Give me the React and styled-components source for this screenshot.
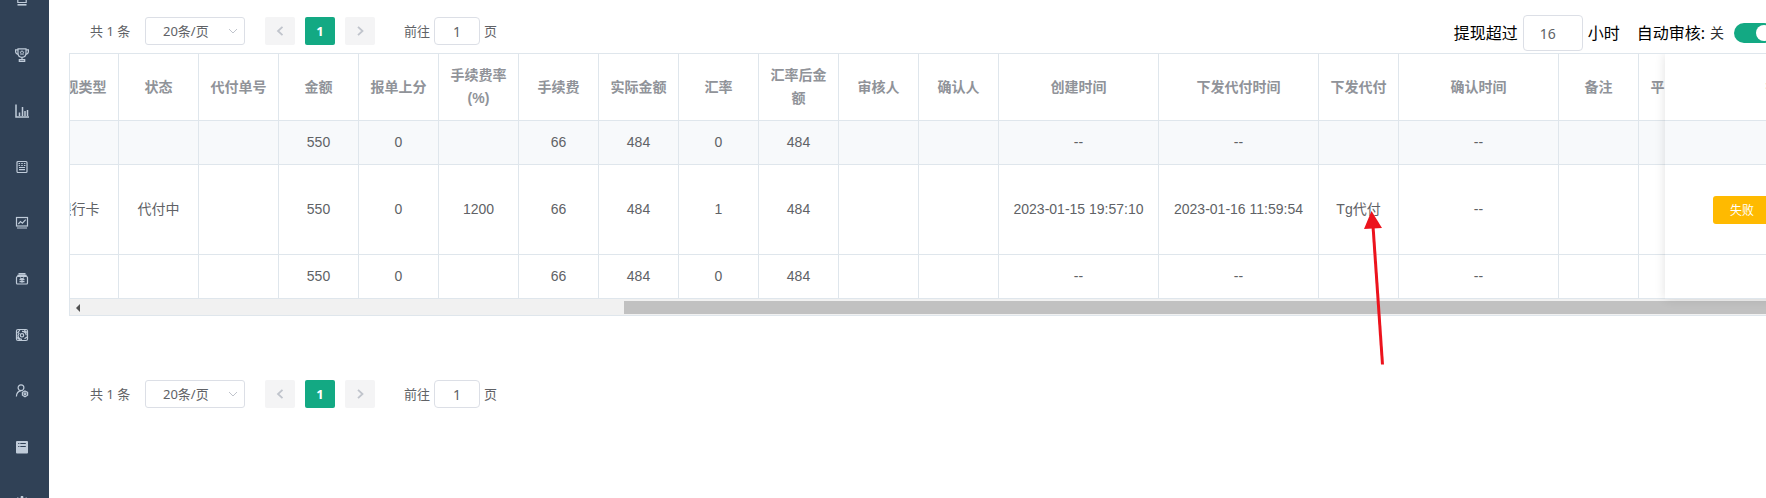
import React, { useLayoutEffect, useRef } from 'react';
import styled, { createGlobalStyle } from 'styled-components';

const GlobalStyle = createGlobalStyle`
  *, *::before, *::after { box-sizing: border-box; }
  body {
    margin: 0;
    background: #fff;
    color: #606266;
    font-family: "Liberation Sans", "Noto Sans CJK SC", sans-serif;
    font-size: 14px;
    overflow: hidden;
  }
  button, input, select { font-family: inherit; margin: 0; }
`;

const uiFont = '"Noto Sans", "Noto Sans CJK SC", sans-serif';
const line = '#dfe6ec';
const green = '#13a983';

/* ---------- shell ---------- */

const Page = styled.div`
  display: flex;
  height: 100vh;
  overflow: hidden;
`;

const Sidebar = styled.nav`
  flex: 0 0 49px;
  overflow: hidden;
  background: #304156;
`;

const Menu = styled.ul`
  list-style: none;
  margin: -29px 0 0;
  padding: 0;
`;

const MenuLink = styled.a`
  display: flex;
  align-items: center;
  height: 56px;
  padding-left: 15px;
  color: #bfcbd9;
`;

const Main = styled.main`
  flex: 1;
  min-width: 0;
  padding-left: 20px;
  overflow: hidden;
`;

const Content = styled.div`
  width: calc(100% + 130px);
`;

const TopBar = styled.div`
  display: flex;
  justify-content: space-between;
  align-items: flex-start;
  padding: 15px 122px 2px 0;
`;

/* ---------- pagination ---------- */

const Pager = styled.div`
  display: flex;
  align-items: center;
  padding: 2px 20px;
  font-family: ${uiFont};
  font-size: 13px;
  line-height: 28px;
`;

const BottomArea = styled.div`
  padding-top: 62px;
`;

const Total = styled.span`
  width: 46px;
  padding-left: 1px;
  margin-right: 10px;
  white-space: nowrap;
`;

const SizeBox = styled.span`
  display: grid;
  align-items: center;
  width: 100px;
  margin-right: 20px;
  & > * { grid-area: 1 / 1; }
`;

const SizeSelect = styled.select`
  appearance: none;
  width: 100%;
  height: 28px;
  padding: 0 24px 0 17px;
  border: 1px solid #dcdfe6;
  border-radius: 3px;
  background: #fff;
  color: #606266;
  font-size: 13px;
`;

const Caret = styled.svg`
  justify-self: end;
  margin-right: 7px;
  pointer-events: none;
`;

const PageButtons = styled.div`
  display: flex;
  gap: 10px;
  margin-right: 29px;
`;

const PageButton = styled.button`
  display: flex;
  align-items: center;
  justify-content: center;
  width: 30px;
  height: 28px;
  padding: 0;
  border: 0;
  border-radius: 2px;
  background: ${(p) => (p.$active ? green : '#f4f4f5')};
  color: ${(p) => (p.$active ? '#fff' : '#c0c4cc')};
  font-size: 13px;
  font-weight: 700;
`;

const Jump = styled.label`
  display: flex;
  align-items: center;
  gap: 4px;
`;

const TextInput = styled.input`
  width: ${(p) => p.$width};
  height: ${(p) => p.$height};
  padding: ${(p) => (p.$left ? '0 16px' : '0 3px')};
  border: 1px solid #dcdfe6;
  border-radius: 4px;
  background: #fff;
  color: #606266;
  font-family: ${uiFont};
  font-size: 14px;
  text-align: ${(p) => (p.$left ? 'left' : 'center')};
  outline: 0;
`;

/* ---------- review settings ---------- */

const Settings = styled.div`
  display: flex;
  align-items: center;
  font-family: ${uiFont};
  font-size: 16px;
  line-height: 36px;
  color: #000;
  white-space: nowrap;
`;

const HoursLabel = styled.label`
  display: flex;
  align-items: center;
  gap: 5px;
  margin-right: 17px;
`;

const SwitchLabel = styled.label`
  display: flex;
  align-items: center;
`;

const OffText = styled.span`
  margin: 0 10px 0 5px;
  font-size: 14px;
  color: #303133;
`;

const Switch = styled.input`
  appearance: none;
  display: flex;
  align-items: center;
  justify-content: flex-end;
  width: 40px;
  height: 20px;
  margin: 0;
  padding: 2px;
  border-radius: 10px;
  background: ${green};
  &::before {
    content: "";
    width: 16px;
    height: 16px;
    border-radius: 50%;
    background: #fff;
  }
  &:not(:checked) {
    justify-content: flex-start;
    background: #dcdfe6;
  }
`;

/* ---------- table ---------- */

const TableArea = styled.div`
  position: relative;
`;

const TableFrame = styled.div`
  position: relative;
  overflow: hidden;
  border: 1px solid ${line};
`;

const Scroller = styled.div`
  overflow: hidden;
`;

const Table = styled.table`
  width: ${(p) => p.$width};
  table-layout: fixed;
  border-collapse: separate;
  border-spacing: 0;
  line-height: 23px;
  text-align: center;
`;

const Row = styled.tr`
  height: ${(p) => p.$height};
  background: ${(p) => (p.$shaded ? '#f7f9fb' : '#fff')};
`;

const HeadCell = styled.th`
  padding: 0 10px;
  border-right: 1px solid ${line};
  border-bottom: 1px solid ${line};
  color: #909399;
  font-weight: 700;
`;

const Cell = styled.td`
  padding: 0 10px;
  border-right: 1px solid ${line};
  border-bottom: 1px solid ${line};
`;

const ActionCell = styled(Cell)`
  padding-left: 48px;
  text-align: left;
`;

const FixedPane = styled.div`
  position: absolute;
  top: 0;
  right: 0;
  width: 230px;
  background: #fff;
  box-shadow: 0 0 10px rgba(0, 0, 0, 0.12);
`;

const FailButton = styled.button`
  display: block;
  height: 28px;
  padding: 0 17px;
  border: 0;
  border-radius: 3px;
  background: #ffba00;
  color: #fff;
  font-size: 12px;
`;

const ScrollTrack = styled.div`
  display: flex;
  align-items: center;
  height: 16px;
  padding-top: 1px;
  background: #f1f1f1;
`;

const ScrollArrow = styled.svg`
  flex: 0 0 17px;
`;

const ScrollThumb = styled.div`
  flex: 1;
  height: 13px;
  margin: 0 17px 0 537px;
  background: #c1c1c1;
`;

const Pointer = styled.svg`
  position: absolute;
  top: 157px;
  left: 1290px;
  pointer-events: none;
`;

/* ---------- icons ---------- */

const Icon = ({ children }) => (
  <svg width="14" height="14" viewBox="0 0 14 14" fill="none" stroke="currentColor" strokeWidth="1.2" aria-hidden="true">
    {children}
  </svg>
);

const icons = [
  {
    name: 'home',
    art: (
      <>
        <path d="M1.500 5.500 7 1l5.500 4.500M2.800 5v5.500h8.400V5" />
        <path d="M2.500 12.800h9" strokeWidth="1.600" />
      </>
    ),
  },
  {
    name: 'awards',
    art: (
      <>
        <path d="M3 .8h8v4.500c0 2.400-1.600 4-4 4s-4-1.600-4-4z" />
        <path d="M3 1.900H.6v1.700C.6 5 1.600 6.200 3.300 6.400M11 1.900h2.400v1.700c0 1.400-1 2.600-2.700 2.800" />
        <path d="M7 9.300v2.200M4.300 13.400v-1.700h5.400v1.700z" />
        <path d="m7 2.600.6 1.300 1.500.2-1.100 1 .3 1.500L7 5.900l-1.300.7.3-1.500-1.100-1 1.500-.2z" strokeWidth=".8" />
      </>
    ),
  },
  {
    name: 'statistics',
    art: (
      <>
        <path d="M1 .5v12.500H14" strokeWidth="1.500" />
        <path d="M4.500 12V8.500M7.500 12V3M10 12V7M12.500 12V6" strokeWidth="1.500" />
      </>
    ),
  },
  {
    name: 'orders',
    art: (
      <>
        <rect x="2" y="1.500" width="10" height="11" rx="1" />
        <path d="M3.600 3.500h1.500M6.200 3.500h1.600M8.900 3.500h1.500M3.600 5.500h1.500M6.200 5.500h1.600M8.900 5.500h1.500M4 7.500h6M4 9.700h6" />
      </>
    ),
  },
  {
    name: 'trends',
    art: (
      <>
        <rect x="1.500" y="1.500" width="11" height="8.500" />
        <path d="m3.300 8 2.200-2.400 1.900 1.500 3.300-3.500M2 12h10" />
      </>
    ),
  },
  {
    name: 'funds',
    art: (
      <>
        <path d="M3.500 1.700h7M2.300 3.500h9.400" strokeWidth="1.500" />
        <rect x="1.500" y="4.500" width="11" height="7.500" rx="1" />
        <path d="m5 5.600 2 1.700 2-1.700M4.500 7.700h5M4.500 9.700h5M7 7.300v3.400" />
      </>
    ),
  },
  {
    name: 'settings',
    art: (
      <>
        <rect x="1.500" y="1.500" width="11" height="11" rx="1.500" />
        <circle cx="7" cy="7.300" r="1.700" />
        <path d="M2.500 5.200 4.800 2M7 3.300c2.500 0 4.200 1.800 4.200 4M7 11.300c-2.300 0-4-1.700-4-4l1.300-2.500M9.300 2.200 12 4.500M9.500 10.800 12 8.900M2.200 9.500l2.500 2.400" />
      </>
    ),
  },
  {
    name: 'members',
    art: (
      <>
        <circle cx="6" cy="3.800" r="2.900" />
        <path d="M1.400 12.500c.1-3.200 1.600-5.200 4.600-5.800" />
        <path d="m10 6.900 2.600 1.500v2.800L10 12.700l-2.600-1.500V8.400z" />
        <circle cx="10" cy="9.800" r="1" />
      </>
    ),
  },
  {
    name: 'records',
    art: (
      <>
        <rect x="1" y="1" width="12" height="12.500" rx="1" fill="currentColor" stroke="none" />
        <path d="M3.200 3.500h1.200M5.300 3.500h5.500M3.200 6.500h1.200M5.300 6.500h5.500" stroke="#304156" />
      </>
    ),
  },
  {
    name: 'system',
    art: (
      <>
        <circle cx="7" cy="7" r="4.500" strokeWidth="2" />
        <path d="M7 0v2M2 2l1.500 1.500M12 2l-1.500 1.500" strokeWidth="2.400" />
      </>
    ),
  },
];

/* ---------- data ---------- */

const columns = [
  { title: '提现类型', width: 80 },
  { title: '状态', width: 80 },
  { title: '代付单号', width: 80 },
  { title: '金额', width: 80 },
  { title: '报单上分', width: 80 },
  { title: '手续费率(%)', width: 80 },
  { title: '手续费', width: 80 },
  { title: '实际金额', width: 80 },
  { title: '汇率', width: 80 },
  { title: '汇率后金额', width: 80 },
  { title: '审核人', width: 80 },
  { title: '确认人', width: 80 },
  { title: '创建时间', width: 160 },
  { title: '下发代付时间', width: 160 },
  { title: '下发代付', width: 80 },
  { title: '确认时间', width: 160 },
  { title: '备注', width: 80 },
  { title: '平台备注', width: 80 },
  { title: '', width: 230 },
];
const tableWidth = columns.reduce((sum, c) => sum + c.width, 0);

const sums = ['', '', '', '550', '0', '', '66', '484', '0', '484', '', '', '--', '--', '', '--', '', '', ''];
const rows = [
  { height: '44px', shaded: true, cells: sums },
  {
    height: '90px',
    action: true,
    cells: ['银行卡', '代付中', '', '550', '0', '1200', '66', '484', '1', '484', '', '',
      '2023-01-15 19:57:10', '2023-01-16 11:59:54', 'Tg代付', '--', '', '', ''],
  },
  { height: '44px', cells: sums },
];

function Pagination() {
  return (
    <Pager>
      <Total>共 1 条</Total>
      <SizeBox>
        <SizeSelect aria-label="每页条数" defaultValue="20">
          <option value="20">20条/页</option>
        </SizeSelect>
        <Caret width="10" height="10" viewBox="0 0 10 10" fill="none" stroke="#c0c4cc">
          <path d="m1 3 4 4 4-4" />
        </Caret>
      </SizeBox>
      <PageButtons>
        <PageButton type="button" disabled aria-label="上一页">
          <svg width="10" height="10" viewBox="0 0 10 10" fill="none" stroke="currentColor" strokeWidth="1.800">
            <path d="M7.500.8 3 5l4.500 4.200" />
          </svg>
        </PageButton>
        <PageButton type="button" $active>1</PageButton>
        <PageButton type="button" disabled aria-label="下一页">
          <svg width="10" height="10" viewBox="0 0 10 10" fill="none" stroke="currentColor" strokeWidth="1.800">
            <path d="M3 .8 7.500 5 3 9.200" />
          </svg>
        </PageButton>
      </PageButtons>
      <Jump>
        前往
        <TextInput $width="46px" $height="28px" defaultValue="1" />
        页
      </Jump>
    </Pager>
  );
}

function WithdrawTable() {
  const scroller = useRef(null);
  useLayoutEffect(() => {
    scroller.current.scrollLeft = 31;
  }, []);

  return (
    <TableArea>
      <TableFrame>
        <Scroller ref={scroller}>
          <Table $width={`${tableWidth}px`}>
            <colgroup>
              {columns.map((c, i) => <col key={i} width={c.width} />)}
            </colgroup>
            <thead>
              <Row $height="67px">
                {columns.map((c, i) => <HeadCell key={i}>{c.title}</HeadCell>)}
              </Row>
            </thead>
            <tbody>
              {rows.map((r, i) => (
                <Row key={i} $height={r.height} $shaded={r.shaded}>
                  {r.cells.map((text, j) => <Cell key={j}>{text}</Cell>)}
                </Row>
              ))}
            </tbody>
          </Table>
        </Scroller>
        <ScrollTrack>
          <ScrollArrow width="17" height="16" viewBox="0 0 17 16" fill="#505050">
            <path d="M6 8l4-4v8z" />
          </ScrollArrow>
          <ScrollThumb />
        </ScrollTrack>
        <FixedPane>
          <Table $width="100%">
            <thead>
              <Row $height="67px"><HeadCell>操作</HeadCell></Row>
            </thead>
            <tbody>
              {rows.map((r, i) => (
                <Row key={i} $height={r.height} $shaded={r.shaded}>
                  <ActionCell>{r.action && <FailButton type="button">失败</FailButton>}</ActionCell>
                </Row>
              ))}
            </tbody>
          </Table>
        </FixedPane>
      </TableFrame>
      <Pointer width="30" height="160" viewBox="0 0 30 160" aria-hidden="true">
        <path d="M14 16 23.500 154.500" stroke="#ec131d" strokeWidth="3" />
        <path d="M12.500 1 23 18 5 19z" fill="#ec131d" />
      </Pointer>
    </TableArea>
  );
}

export default function App() {
  return (
    <Page>
      <GlobalStyle />
      <Sidebar>
        <Menu>
          {icons.map((icon) => (
            <li key={icon.name}>
              <MenuLink href={`#${icon.name}`} aria-label={icon.name}>
                <Icon>{icon.art}</Icon>
              </MenuLink>
            </li>
          ))}
        </Menu>
      </Sidebar>
      <Main>
        <Content>
          <TopBar>
            <Pagination />
            <Settings>
              <HoursLabel>
                提现超过
                <TextInput $width="60px" $height="36px" $left defaultValue="16" />
                小时
              </HoursLabel>
              <SwitchLabel>
                自动审核:
                <OffText>关</OffText>
                <Switch type="checkbox" role="switch" defaultChecked />
              </SwitchLabel>
            </Settings>
          </TopBar>
          <WithdrawTable />
          <BottomArea>
            <Pagination />
          </BottomArea>
        </Content>
      </Main>
    </Page>
  );
}
